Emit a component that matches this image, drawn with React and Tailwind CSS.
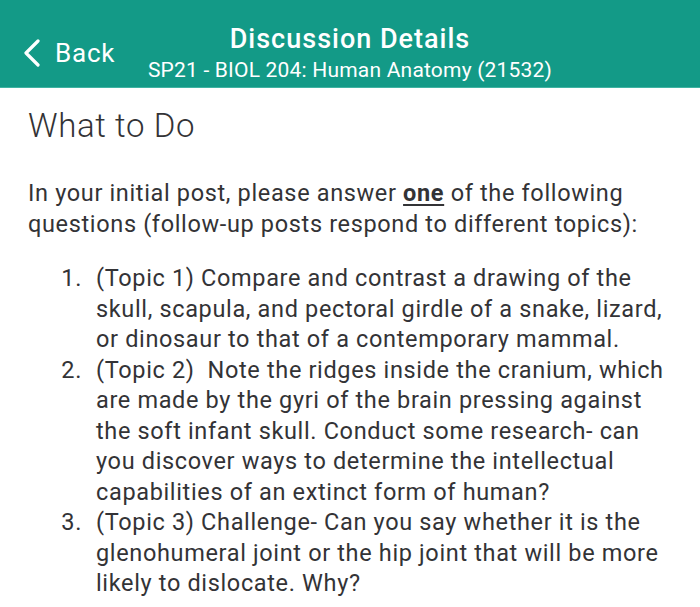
export default function App() {
	const items = [
		"(Topic 1) Compare and contrast a drawing of the skull, scapula, and pectoral girdle of a snake, lizard, or dinosaur to that of a contemporary mammal.",
		"(Topic 2)\u00a0 Note the ridges inside the cranium, which are made by the gyri of the brain pressing against the soft infant skull. Conduct some research- can you discover ways to determine the intellectual capabilities of an extinct form of human?",
		"(Topic 3) Challenge- Can you say whether it is the glenohumeral joint or the hip joint that will be more likely to dislocate. Why?",
	];

	return (
		<div className="w-[700px] h-[607px] bg-white overflow-hidden font-['Roboto',sans-serif] text-[#333336]">
			<div className="relative h-[88px] bg-[#139a87] text-white border-b border-[#3fb3a2]">
				<div className="absolute left-[22px] top-[39px] flex items-center gap-[14px]">
					<svg width="19" height="28" viewBox="0 0 19 28" fill="none">
						<path d="M16 2 L4 14 L16 26" stroke="white" strokeWidth="3.2" strokeLinecap="round" strokeLinejoin="round" />
					</svg>
					<span className="text-[26px] leading-none tracking-[0.8px]">Back</span>
				</div>
				<div className="flex flex-col items-center pt-[22px]">
					<div className="text-[27px] font-medium leading-[34px] tracking-[1px]">Discussion Details</div>
					<div className="text-[21px] leading-[28px] tracking-[0.2px]">SP21 - BIOL 204: Human Anatomy (21532)</div>
				</div>
			</div>

			<div className="pl-[28px] pr-[20px] tracking-[0.65px]">
				<h1 className="text-[33px] font-light leading-[40px] pt-[18px] tracking-[0.6px]">What to Do</h1>
				<p className="text-[23.5px] leading-[30.5px] mt-[32px]">
					In your initial post, please answer <u className="font-bold underline-offset-[3px]">one</u> of the following questions (follow-up posts respond to different topics):
				</p>
				<ol className="mt-[24px] text-[23.5px] leading-[30.5px]">
					{items.map((t, i) => (
						<li key={i} className="flex">
							<span className="w-[68px] shrink-0 text-right pr-[14px]">{i + 1}.</span>
							<span>{t}</span>
						</li>
					))}
				</ol>
			</div>
		</div>
	);
}
